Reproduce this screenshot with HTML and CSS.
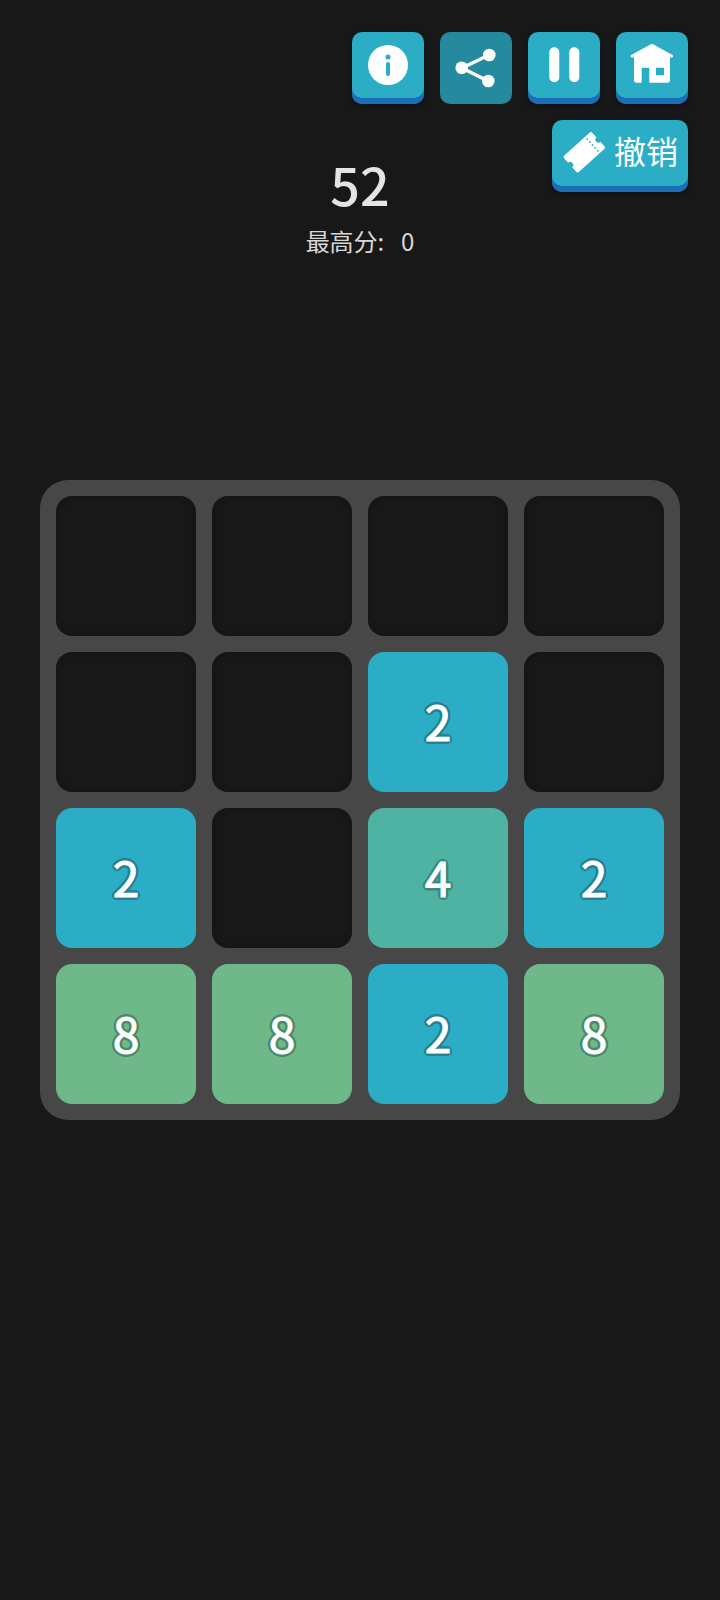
FILE: index.html
```html
<!DOCTYPE html>
<html lang="zh">
<head>
<meta charset="utf-8">
<title>2048</title>
<link rel="stylesheet" href="styles.css">
</head>
<body>
<div class="toolbar">
  <button class="btn" aria-label="info"><svg viewBox="0 0 72 66" class="ico"><circle cx="36" cy="33" r="20" fill="#fff"/><circle cx="36" cy="25" r="2.500" fill="#2badc5"/><rect x="34" y="30" width="4" height="14" rx="2" fill="#2badc5"/></svg></button>
  <button class="btn btn-active" aria-label="share"><svg viewBox="0 0 72 66" class="ico"><path d="M49 23 L22 36 L48 49" fill="none" stroke="#fff" stroke-width="3.500"/><circle cx="49.300" cy="23" r="6.300" fill="#fff"/><circle cx="21.700" cy="35.700" r="6.300" fill="#fff"/><circle cx="48.300" cy="49" r="6.300" fill="#fff"/></svg></button>
  <button class="btn" aria-label="pause"><svg viewBox="0 0 72 66" class="ico"><rect x="21.300" y="15.300" width="10" height="35" rx="5" fill="#fff"/><rect x="41.300" y="15.300" width="10" height="35" rx="5" fill="#fff"/></svg></button>
  <button class="btn" aria-label="home"><svg viewBox="0 0 72 66" class="ico"><path fill="#fff" fill-rule="evenodd" d="M36 12 Q37 12 38 12.800 L56.500 23 Q58 24.700 56 25.500 L54 25.500 V48 Q54 50.700 51.500 50.700 H33.300 V35.700 H25.700 V50.700 H20.500 Q18 50.700 18 48 V25.500 H16 Q13.500 24.700 15.200 23 L34 12.800 Q35 12 36 12 Z M40 35.700 V43.300 H48 V35.700 Z"/></svg></button>
</div>
<div class="status">
  <div class="status-side"></div>
  <div class="score">
    <div class="score-now">52</div>
    <div class="score-best">最高分:&nbsp;&nbsp;0</div>
  </div>
  <button class="btn btn-undo"><svg viewBox="0 0 56 56" class="ico-ticket"><g transform="translate(28.300 28.300) rotate(-42)"><path fill="#fff" d="M-17 -11 H17 Q19 -11 19 -9 V-3 A3 3 0 0 0 19 3 V9 Q19 11 17 11 H-17 Q-19 11 -19 9 V3 A3 3 0 0 0 -19 -3 V-9 Q-19 -11 -17 -11 Z"/><g fill="#2badc5"><circle cx="11" cy="-8" r="0.900"/><circle cx="11" cy="-4" r="0.900"/><circle cx="11" cy="0" r="0.900"/><circle cx="11" cy="4" r="0.900"/><circle cx="11" cy="8" r="0.900"/></g></g></svg><span class="undo-label">撤销</span></button>
</div>
<main class="board">
  <div class="cell"></div><div class="cell"></div><div class="cell"></div><div class="cell"></div>
  <div class="cell"></div><div class="cell"></div><div class="cell tile t2">2</div><div class="cell"></div>
  <div class="cell tile t2">2</div><div class="cell"></div><div class="cell tile t4">4</div><div class="cell tile t2">2</div>
  <div class="cell tile t8">8</div><div class="cell tile t8">8</div><div class="cell tile t2">2</div><div class="cell tile t8">8</div>
</main>
</body>
</html>
```
FILE: styles.css
```css
* { box-sizing: border-box; }
html, body { margin: 0; padding: 0; }
body {
  width: 720px;
  height: 1600px;
  background: #181818;
  font-family: "Noto Sans CJK SC", "Noto Sans", sans-serif;
  overflow: hidden;
}
.toolbar {
  display: flex;
  justify-content: flex-end;
  gap: 16px;
  padding: 32px 32px 0 0;
}
.btn {
  width: 72px;
  height: 72px;
  margin: 0;
  padding: 0;
  border: 0;
  border-radius: 10px;
  background: #2badc5;
  box-shadow: inset 0 -6px 0 #1c6cb8, 0 2px 4px rgba(0, 0, 0, .35);
  display: flex;
  align-items: flex-start;
  justify-content: center;
  color: #fff;
  font-family: inherit;
}
.btn-active {
  background: #258a9e;
  box-shadow: none;
}
.ico { width: 72px; height: 66px; display: block; }
.status {
  display: grid;
  grid-template-columns: 136px 1fr 136px;
  padding: 16px 32px 0;
  height: 376px;
  align-items: start;
}
.score {
  text-align: center;
  color: #e4e4e4;
  padding-top: 32px;
}
.score-now { font-size: 52px; font-weight: 500; line-height: 64px; }
.score-best { font-size: 24px; line-height: 36px; color: #d8d8d8; margin-top: 7px; word-spacing: 3px; }
.btn-undo {
  width: 136px;
  justify-content: flex-start;
  gap: 2px;
  padding: 4px 0 0 4px;
}
.ico-ticket { width: 56px; height: 56px; display: block; flex: none; }
.undo-label { font-size: 32px; line-height: 52px; white-space: nowrap; }
.board {
  width: 640px;
  height: 640px;
  margin-left: 40px;
  padding: 16px;
  border-radius: 28px;
  background: #474747;
  display: grid;
  grid-template-columns: repeat(4, 140px);
  grid-template-rows: repeat(4, 140px);
  gap: 16px;
}
.cell {
  border-radius: 16px;
  background: #181818;
  box-shadow: inset 0 0 6px rgba(0, 0, 0, .3);
}
.tile {
  display: flex;
  align-items: center;
  justify-content: center;
  padding-bottom: 4px;
  color: #fff;
  font-size: 48px;
  -webkit-text-stroke: 1px #fff;
  box-shadow: none;
}
.t2 { background: #2badc5; text-shadow: 3px 0 #25808f, -3px 0 #25808f, 0 3px #25808f, 0 -3px #25808f, 2px 2px #25808f, -2px 2px #25808f, 2px -2px #25808f, -2px -2px #25808f; }
.t4 { background: #4fb3a4; text-shadow: 3px 0 #368a80, -3px 0 #368a80, 0 3px #368a80, 0 -3px #368a80, 2px 2px #368a80, -2px 2px #368a80, 2px -2px #368a80, -2px -2px #368a80; }
.t8 { background: #6eb88a; text-shadow: 3px 0 #4c8a66, -3px 0 #4c8a66, 0 3px #4c8a66, 0 -3px #4c8a66, 2px 2px #4c8a66, -2px 2px #4c8a66, 2px -2px #4c8a66, -2px -2px #4c8a66; }
```
